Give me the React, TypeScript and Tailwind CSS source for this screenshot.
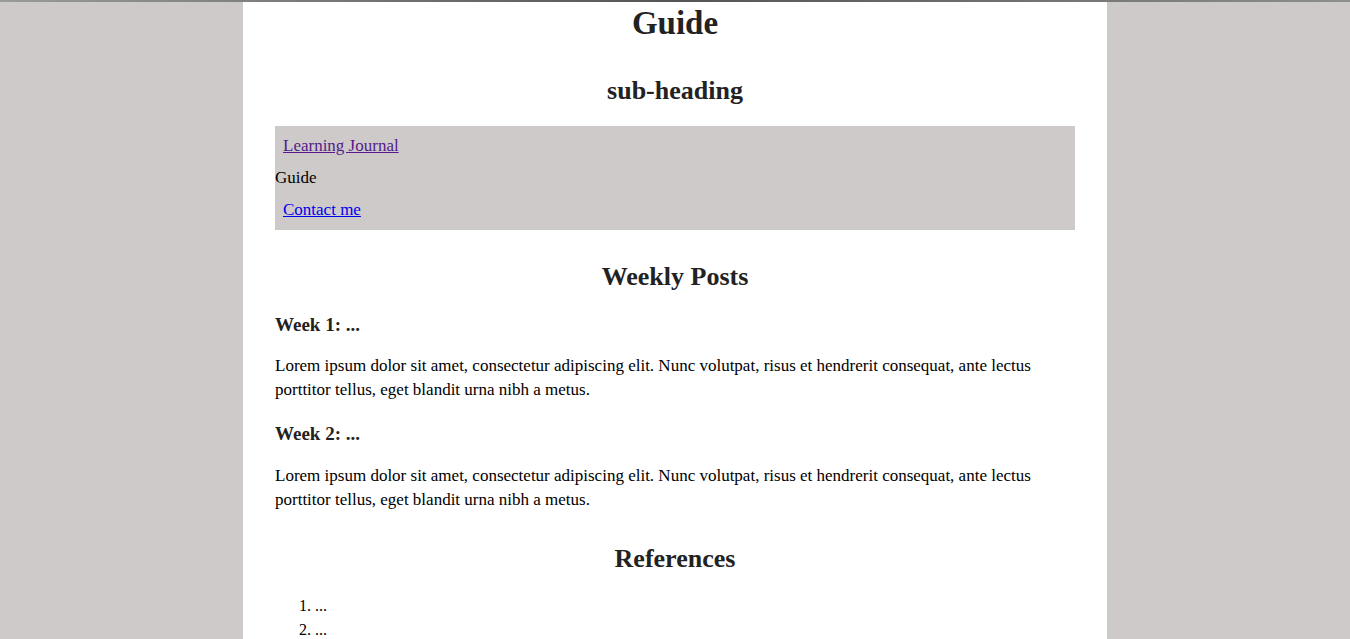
const lorem =
  "Lorem ipsum dolor sit amet, consectetur adipiscing elit. Nunc volutpat, risus et hendrerit consequat, ante lectus porttitor tellus, eget blandit urna nibh a metus.";

const weeks = ["Week 1: ...", "Week 2: ..."];

export default function App() {
  return (
    <div
      className="min-h-screen bg-[#cecac9] text-black"
      style={{ fontFamily: '"Liberation Serif", "DejaVu Serif", serif' }}
    >
      <div className="h-[2px] bg-gradient-to-r from-[#9a9a98] via-[#555553] to-[#8e8e8c]" />
      <main className="mx-auto w-[864px] bg-white px-8 pb-10">
        <h1 className="pt-[1px] text-center text-[33px] font-bold leading-[40px] text-[#222]">
          Guide
        </h1>
        <h2 className="mt-8 text-center text-[26px] font-bold leading-8 text-[#222]">
          sub-heading
        </h2>

        <nav className="mt-[19px] bg-[#cecac9] py-1 text-[17px] leading-8">
          <div className="pl-2">
            <a href="#" className="text-[#551a8b] underline">
              Learning Journal
            </a>
          </div>
          <div>Guide</div>
          <div className="pl-2">
            <a href="#" className="text-[#0000ee] underline">
              Contact me
            </a>
          </div>
        </nav>

        <h2 className="mt-[31px] text-center text-[26px] font-bold leading-8 text-[#222]">
          Weekly Posts
        </h2>

        {weeks.map((w, i) => (
          <section key={w}>
            <h3 className="mt-[19px] text-[19px] font-bold leading-[26px] text-[#222]">
              {w}
            </h3>
            <p className={`${i === 0 ? "mt-4" : "mt-[17px]"} text-[17px] leading-6`}>{lorem}</p>
          </section>
        ))}

        <h2 className="mt-[31px] text-center text-[26px] font-bold leading-8 text-[#222]">
          References
        </h2>
        <ol className="mt-[19px] list-decimal pl-10 text-[16px] leading-6">
          <li>...</li>
          <li>...</li>
        </ol>
      </main>
    </div>
  );
}
